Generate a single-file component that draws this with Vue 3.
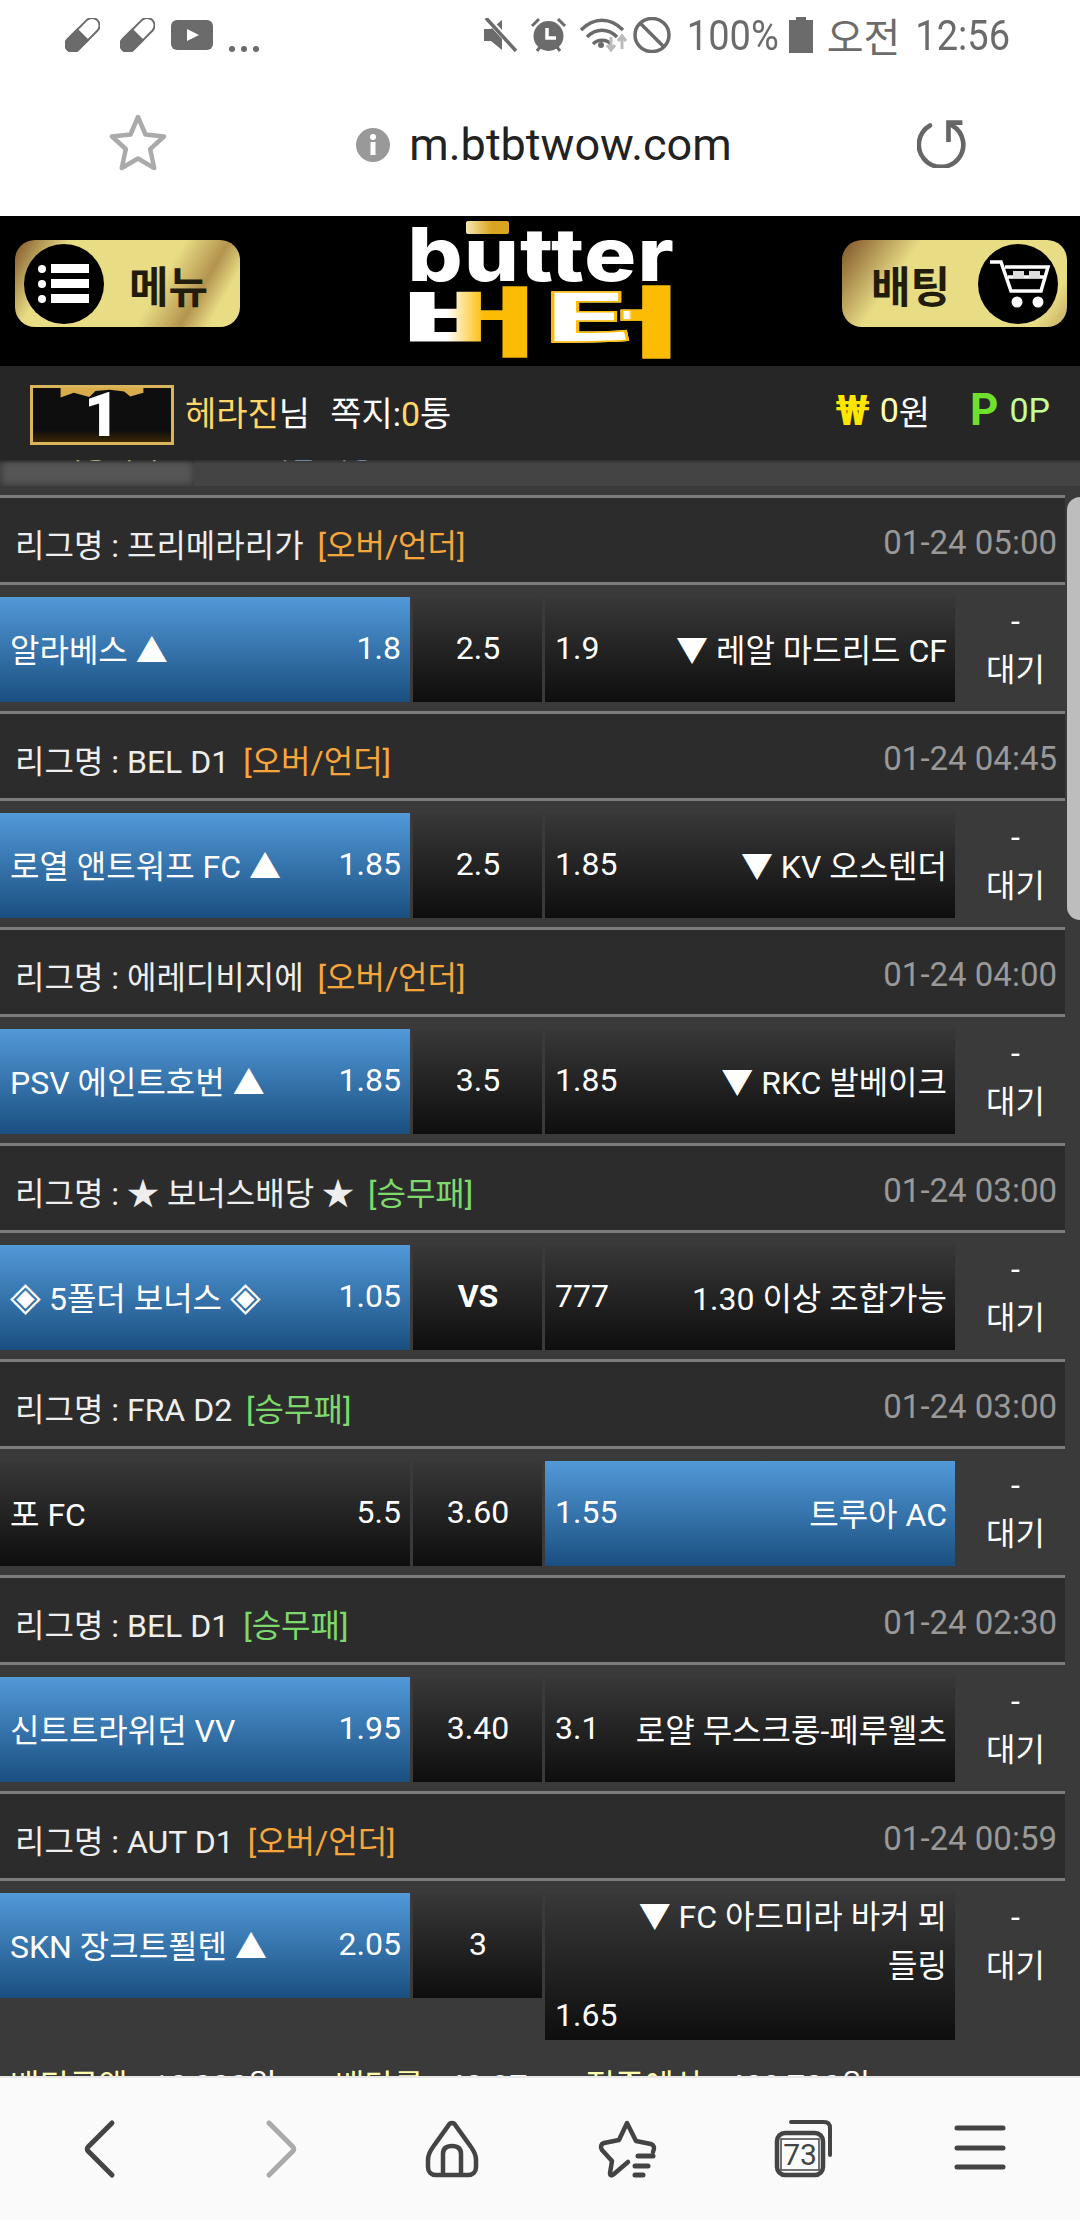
<template>
  <div class="phone">
    <div class="status">
      <div class="status-left">
        <svg v-for="n in 2" :key="n" class="pill" viewBox="0 0 35 34">
          <g transform="rotate(45 17.5 17)">
            <rect x="10" y="-4" width="15" height="42" rx="7.5" fill="none" stroke="#6b6b6b" stroke-width="2" />
            <path d="M10 17h15v13.5a7.500 7.500 0 0 1-15 0z" fill="#6b6b6b" stroke="#6b6b6b" stroke-width="2" />
          </g>
        </svg>
        <svg class="yt" viewBox="0 0 42 30">
          <rect width="42" height="30" rx="6" fill="#6b6b6b" />
          <path d="M16 9l12 6-12 6z" fill="#fff" />
        </svg>
        <span class="more-dots"><i></i><i></i><i></i></span>
      </div>
      <div class="status-right">
        <svg class="st-mute" viewBox="0 0 34 34">
          <path d="M0 11h7l11-9v30l-11-9H0z" fill="#6b6b6b" />
          <path d="M3 0l30 33" stroke="#fff" stroke-width="6" />
          <path d="M2 0l30 33" stroke="#6b6b6b" stroke-width="3.500" />
        </svg>
        <svg class="st-alarm" viewBox="0 0 37 36">
          <circle cx="18.500" cy="19" r="15" fill="#6b6b6b" />
          <path d="M2 9l7-7M35 9l-7-7M7 34l3-4M30 34l-3-4" stroke="#6b6b6b" stroke-width="3" />
          <path d="M17 11v10h9" fill="none" stroke="#fff" stroke-width="3.500" />
        </svg>
        <svg class="st-wifi" viewBox="0 0 47 34">
          <path d="M1 12c13-13 29-13 42 0M7 19c9-9 21-9 30 0M13 26c5-5 13-5 18 0" fill="none" stroke="#6b6b6b" stroke-width="3.500" />
          <circle cx="21" cy="27" r="3" fill="#6b6b6b" />
          <path d="M31 19v12M27 27l4 5 4-5" fill="none" stroke="#bbb" stroke-width="3" />
          <path d="M42 31V18M38 23l4-5 4 5" fill="none" stroke="#bbb" stroke-width="3" />
        </svg>
        <svg class="st-block" viewBox="0 0 38 36">
          <ellipse cx="19" cy="18" rx="17" ry="16.500" fill="none" stroke="#6b6b6b" stroke-width="3.500" />
          <path d="M7 6l24 24" stroke="#6b6b6b" stroke-width="3.500" />
        </svg>
        <span class="st-pct">100%</span>
        <svg class="st-batt" viewBox="0 0 24 36">
          <path d="M7 0h10v3h7v33H0V3h7z" fill="#6b6b6b" />
        </svg>
        <span class="st-ampm">오전</span>
        <span class="st-time">12:56</span>
      </div>
    </div>

    <div class="urlbar">
      <svg class="url-star" viewBox="0 0 58 58">
        <path d="M29 3l7.500 17.500 18.500 2-13.800 12.600 4 19L29 44.500 12.800 54l4-19L3 22.500l18.500-2z" fill="none" stroke="#aaa" stroke-width="4.500" stroke-linejoin="round" />
      </svg>
      <div class="address">
        <svg class="info-icon" viewBox="0 0 34 34">
          <circle cx="17" cy="17" r="17" fill="#999" />
          <rect x="14.500" y="14" width="5" height="13" fill="#fff" />
          <circle cx="17" cy="9" r="3" fill="#fff" />
        </svg>
        <span class="url-text">m.btbtwow.com</span>
      </div>
      <svg class="reload" viewBox="0 0 54 54">
        <path d="M14 8a24 24 0 1 0 24 0" fill="none" stroke="#666" stroke-width="5" stroke-linecap="round" />
        <path d="M34 26V5h15" fill="none" stroke="#666" stroke-width="5" />
      </svg>
    </div>

    <header class="site-head">
      <div class="gold-btn">
        <span class="btn-circle">
          <svg viewBox="0 0 52 44" class="btn-list">
            <g fill="#fff">
              <circle cx="4" cy="7" r="4" /><circle cx="4" cy="22" r="4" /><circle cx="4" cy="37" r="4" />
              <rect x="13" y="2" width="38" height="9" /><rect x="13" y="17" width="38" height="9" /><rect x="13" y="32" width="38" height="9" />
            </g>
          </svg>
        </span>
        <span class="btn-label">메뉴</span>
      </div>

      <div class="logo">
        <div class="logo-en"><span class="logo-en-text">butter</span><i class="macron"></i></div>
        <div class="logo-ko"><span class="logo-ko-text"><span class="ko-a">버</span><span class="ko-b">터</span></span></div>
      </div>

      <div class="gold-btn gold-btn-bet">
        <span class="btn-label">배팅</span>
        <span class="btn-circle">
          <svg viewBox="0 0 64 50" class="btn-cart">
            <path d="M2 3h11l10 29h30l7-24H17M20 18h37" fill="none" stroke="#fff" stroke-width="3.500" />
            <rect x="25" y="12" width="11" height="7" fill="#ddd" /><rect x="41" y="12" width="11" height="7" fill="#ddd" />
            <circle cx="29" cy="43" r="5.500" fill="#fff" /><circle cx="50" cy="43" r="5.500" fill="#fff" />
          </svg>
        </span>
      </div>
    </header>

    <div class="user-bar">
      <div class="user-left">
        <div class="rank">
          <svg class="rank-top" viewBox="0 0 138 20">
            <path d="M0 0h138v8l-22 6-10-8-24-3-24 2-10 10-26-7L0 16z" fill="#d9ac4a" />
          </svg>
          <span>1</span>
        </div>
        <span class="nick">헤라진</span><span>님</span>
        <span class="memo">쪽지:<em>0</em>통</span>
      </div>
      <div class="user-right">
        <b class="won-mark">₩</b><span class="won-val">0</span><span>원</span>
        <b class="p-mark">P</b><span class="p-val">0P</span>
      </div>
    </div>

    <main class="content">
      <div class="tabs">
        <div class="tab tab-on"><span>배팅내역</span></div>
        <div class="tab"><span>지난 배팅</span></div>
      </div>

      <section v-for="g in games" :key="g.time + g.home" class="game">
        <div class="league">
          <div>리그명 : {{ g.league }} <span class="tag" :class="g.kind === '승무패' ? 'tag-green' : 'tag-orange'">[{{ g.kind }}]</span></div>
          <div class="time">{{ g.time }}</div>
        </div>
        <div class="row">
          <div class="cell home" :class="{ on: g.pick === 'home' }">
            <span v-if="g.bonus"><i class="dia">◈</i> {{ g.home }} <i class="dia">◈</i></span>
            <span v-else>{{ g.home }}</span>
            <span>{{ g.homeOdd }}</span>
          </div>
          <div class="cell mid" :class="{ vs: g.mid === 'VS' }">{{ g.mid }}</div>
          <div v-if="g.stacked" class="cell away stacked">
            <div class="away-name">{{ g.away }}</div>
            <div>{{ g.awayOdd }}</div>
          </div>
          <div v-else class="cell away" :class="{ on: g.pick === 'away' }">
            <span>{{ g.awayOdd }}</span><span>{{ g.away }}</span>
          </div>
          <div class="state">-<br />대기</div>
        </div>
      </section>

      <div class="slip">
        <span class="slip-item"><em>배팅금액 :</em> 10,000원</span>
        <span class="slip-item"><em>배당률 :</em> 40.97</span>
        <span class="slip-item"><em>적중예상 :</em> 409,700원</span>
      </div>

      <div class="scrollbar"></div>
    </main>

    <nav class="bottom-bar">
      <svg class="nav-ico" viewBox="0 0 60 60">
        <path d="M42 4L18 28c-1 1-1 3 0 4l24 24" fill="none" stroke="#444" stroke-width="5" stroke-linecap="round" />
      </svg>
      <svg class="nav-ico" viewBox="0 0 60 60">
        <path d="M23 4l24 24c1 1 1 3 0 4L23 56" fill="none" stroke="#aaa" stroke-width="5" stroke-linecap="round" />
      </svg>
      <svg class="nav-ico" viewBox="0 0 60 60">
        <path d="M30 4c2 0 3 1 4 3l15 21c3 4 5 8 5 13v7c0 5-3 8-8 8H14c-5 0-8-3-8-8v-7c0-5 2-9 5-13L26 7c1-2 2-3 4-3z" fill="none" stroke="#444" stroke-width="4.500" />
        <path d="M21 55V35c0-6 4-8 9-8s9 2 9 8v20" fill="none" stroke="#444" stroke-width="4.500" />
      </svg>
      <svg class="nav-ico" viewBox="0 0 60 60">
        <path d="M55 33c2-4 1-7-2-8l-15-3-9-18-8 17-15 3c-3 1-4 4-2 7l10 11-2 12c0 3 2 3 4 1l14-12" fill="none" stroke="#444" stroke-width="4.500" stroke-linejoin="round" stroke-linecap="round" />
        <path d="M40 37h15M37 47h13M37 56h8" stroke="#444" stroke-width="5" stroke-linecap="round" />
      </svg>
      <div class="tabs-ico">
        <svg viewBox="0 0 60 60">
          <path d="M17 3h33c4 0 6 2 6 6v27" fill="none" stroke="#444" stroke-width="4" stroke-linecap="round" />
          <rect x="3" y="14" width="46" height="42" rx="8" fill="none" stroke="#444" stroke-width="4.500" />
          <rect x="7" y="20" width="38" height="31" fill="none" stroke="#444" stroke-width="1.500" />
        </svg>
        <span class="tabs-num">73</span>
      </div>
      <svg class="nav-ico" viewBox="0 0 60 60">
        <path d="M7 9h46M7 29h46M7 48h46" stroke="#444" stroke-width="5" stroke-linecap="round" />
      </svg>
    </nav>
  </div>
</template>

<script setup>
const games = [
  { league: '프리메라리가', kind: '오버/언더', time: '01-24 05:00', home: '알라베스 ▲', homeOdd: '1.8', mid: '2.5', awayOdd: '1.9', away: '▼ 레알 마드리드 CF', pick: 'home' },
  { league: 'BEL D1', kind: '오버/언더', time: '01-24 04:45', home: '로열 앤트워프 FC ▲', homeOdd: '1.85', mid: '2.5', awayOdd: '1.85', away: '▼ KV 오스텐더', pick: 'home' },
  { league: '에레디비지에', kind: '오버/언더', time: '01-24 04:00', home: 'PSV 에인트호번 ▲', homeOdd: '1.85', mid: '3.5', awayOdd: '1.85', away: '▼ RKC 발베이크', pick: 'home' },
  { league: '★ 보너스배당 ★', kind: '승무패', time: '01-24 03:00', home: '5폴더 보너스', bonus: true, homeOdd: '1.05', mid: 'VS', awayOdd: '777', away: '1.30 이상 조합가능', pick: 'home' },
  { league: 'FRA D2', kind: '승무패', time: '01-24 03:00', home: '포 FC', homeOdd: '5.5', mid: '3.60', awayOdd: '1.55', away: '트루아 AC', pick: 'away' },
  { league: 'BEL D1', kind: '승무패', time: '01-24 02:30', home: '신트트라위던 VV', homeOdd: '1.95', mid: '3.40', awayOdd: '3.1', away: '로얄 무스크롱-페루웰츠', pick: 'home' },
  { league: 'AUT D1', kind: '오버/언더', time: '01-24 00:59', home: 'SKN 장크트푈텐 ▲', homeOdd: '2.05', mid: '3', awayOdd: '1.65', away: '▼ FC 아드미라 바커 뫼들링', pick: 'home', stacked: true }
]
</script>

<style>
html,
body {
  margin: 0;
  background: #fff;
}
</style>

<style scoped>
.phone {
  width: 1080px;
  height: 2220px;
  overflow: hidden;
  display: flex;
  flex-direction: column;
  font-family: Roboto, "Noto Sans CJK KR", sans-serif;
  font-size: 32px;
  color: #fff;
}

/* status bar */
.status {
  height: 70px;
  flex: none;
  background: #fff;
  display: flex;
  justify-content: space-between;
  align-items: center;
  padding: 0 70px 0 65px;
  color: #6b6b6b;
}
.status-left,
.status-right {
  display: flex;
  align-items: center;
}
.pill {
  width: 35px;
  height: 34px;
  margin-right: 20px;
}
.yt {
  width: 42px;
  height: 30px;
  margin-left: -4px;
}
.more-dots {
  display: flex;
  gap: 6px;
  margin: 28px 0 0 16px;
}
.more-dots i {
  width: 6px;
  height: 6px;
  border-radius: 50%;
  background: #6b6b6b;
}
.st-mute {
  width: 34px;
  height: 34px;
}
.st-alarm {
  width: 37px;
  height: 36px;
  margin-left: 12px;
}
.st-wifi {
  width: 47px;
  height: 34px;
  margin-left: 13px;
}
.st-block {
  width: 38px;
  height: 36px;
  margin-left: 6px;
}
.st-pct,
.st-time {
  display: inline-block;
  font-size: 38px;
  transform: scaleY(1.14);
}
.st-pct {
  margin-left: 16px;
}
.st-batt {
  width: 24px;
  height: 36px;
  margin-left: 10px;
}
.st-ampm {
  font-size: 40px;
  margin-left: 14px;
}
.st-time {
  margin-left: 15px;
}

/* url bar */
.urlbar {
  height: 146px;
  flex: none;
  background: #fff;
  display: flex;
  align-items: center;
  justify-content: space-between;
  padding: 0 113px 0 109px;
  box-sizing: border-box;
}
.url-star {
  width: 58px;
  height: 58px;
}
.address {
  display: flex;
  align-items: center;
  gap: 19px;
  margin: 3px 0 0 4px;
}
.info-icon {
  width: 34px;
  height: 34px;
}
.url-text {
  font-size: 45px;
  color: #222;
}
.reload {
  width: 50px;
  height: 50px;
}

/* site header */
.site-head {
  height: 150px;
  flex: none;
  background: #000;
  display: flex;
  align-items: center;
  justify-content: space-between;
  padding: 0 13px 0 15px;
}
.gold-btn {
  width: 225px;
  height: 87px;
  border-radius: 20px;
  margin-top: -15px;
  box-sizing: border-box;
  padding: 0 9px;
  display: flex;
  align-items: center;
  gap: 25px;
  background: linear-gradient(120deg, #7d5226 0%, #e8dc85 20%, #e8dc85 62%, #b3944e 78%, #e8dc85 88%);
}
.gold-btn-bet {
  justify-content: flex-end;
  gap: 28px;
  background: linear-gradient(125deg, #7d5226 0%, #e8dc85 28%, #e8dc85 88%, #c4ab60 100%);
}
.btn-circle {
  width: 80px;
  height: 80px;
  border-radius: 50%;
  background: #000;
  flex: none;
  display: flex;
  align-items: center;
  justify-content: center;
}
.btn-list {
  width: 52px;
  height: 44px;
}
.btn-cart {
  width: 64px;
  height: 50px;
  margin-left: 4px;
}
.btn-label {
  font-family: "Noto Sans CJK KR", sans-serif;
  font-size: 43px;
  font-weight: 700;
  color: #221c0c;
}

/* logo */
.logo {
  width: 260px;
  height: 134px;
  margin-top: -7px;
  display: flex;
  flex-direction: column;
  align-items: center;
}
.logo-en {
  position: relative;
  height: 62px;
  line-height: 62px;
  width: 260px;
  text-align: center;
}
.logo-en-text {
  display: inline-block;
  font-family: Inter, sans-serif;
  font-weight: 800;
  font-size: 74px;
  line-height: 62px;
  letter-spacing: 1px;
  transform: scaleX(1.17);
  color: #fff;
  margin-top: 2px;
}
.macron {
  position: absolute;
  left: 55px;
  top: 0;
  width: 43px;
  height: 13px;
  border-radius: 2px;
  background: linear-gradient(90deg, #f6e7b0, #d9a520 60%);
}
.logo-ko {
  height: 72px;
  line-height: 72px;
  width: 260px;
  text-align: center;
}
.logo-ko-text {
  display: inline-block;
  font-family: "Noto Sans CJK KR", sans-serif;
  font-weight: 900;
  font-size: 75px;
  line-height: 70px;
  transform: scaleX(2.05);
}
.ko-a,
.ko-b {
  -webkit-background-clip: text;
  background-clip: text;
  color: transparent;
}
.ko-a {
  background-image: linear-gradient(90deg, #fff 33%, #fcbc05 60%);
}
.ko-b {
  background-image: linear-gradient(90deg, #fff 62%, #fcbc05 64%);
  -webkit-text-stroke: 1.500px #fcbc05;
}

/* user bar */
.user-bar {
  height: 94px;
  flex: none;
  background: #262626;
  display: flex;
  align-items: center;
  justify-content: space-between;
  padding: 0 30px;
  box-sizing: border-box;
  position: relative;
  z-index: 1;
  font-size: 34px;
  box-shadow: 0 2px 2px rgba(0, 0, 0, .3);
}
.user-left,
.user-right {
  display: flex;
  align-items: center;
}
.user-right {
  margin-top: -6px;
}
.user-left {
  margin-top: -3px;
}
.rank {
  position: relative;
  width: 144px;
  height: 60px;
  box-sizing: border-box;
  border: 3px solid #d9b45a;
  background: linear-gradient(180deg, #0e0e0e 0%, #0e0e0e 78%, #3a2606 100%);
  display: flex;
  align-items: center;
  justify-content: center;
  margin-right: 11px;
  margin-top: 6px;
}
.rank-top {
  position: absolute;
  left: 0;
  top: 0;
  width: 138px;
  height: 12px;
}
.rank span {
  position: relative;
  font-size: 62px;
  font-weight: 900;
  line-height: 54px;
}
.nick {
  color: #ffd766;
}
.memo {
  margin-left: 20px;
}
.memo em {
  font-style: normal;
  color: #ffd766;
}
.won-mark {
  color: #ffe600;
  font-size: 42px;
  margin-right: 10px;
}
.won-val {
  color: #ffffb0;
}
.p-mark {
  color: #6fe02c;
  font-size: 44px;
  margin: 0 11px 0 40px;
}
.p-val {
  color: #c4ff96;
}

/* betting list */
.content {
  flex: 1;
  position: relative;
  overflow: hidden;
  background: #3a3a3a;
  display: flex;
  flex-direction: column;
}
.tabs {
  height: 26px;
  flex: none;
  margin-bottom: 9px;
  background: #444;
  display: flex;
  overflow: hidden;
}
.tab {
  height: 26px;
  line-height: 0;
  font-size: 28px;
  color: #9db4d8;
  padding-left: 70px;
}
.tab span {
  position: relative;
  top: -10px;
}
.tab-on {
  width: 194px;
  box-sizing: border-box;
  padding-left: 56px;
  color: #e8e89a;
  background: #565656;
  box-shadow: inset 0 0 8px rgba(0, 0, 0, .45);
}
.game {
  flex: none;
  width: 1065px;
}
.league {
  height: 90px;
  box-sizing: border-box;
  border-top: 3px solid #7d7d7d;
  border-bottom: 3px solid #7d7d7d;
  background: #2c2c2c;
  display: flex;
  align-items: center;
  justify-content: space-between;
  padding: 5px 8px 0 15px;
  font-size: 32px;
  color: #eee;
}
.time {
  color: #999;
  font-size: 33px;
}
.tag {
  margin-left: 6px;
}
.tag-orange {
  color: #f8a63c;
}
.tag-green {
  color: #7dd96c;
}
.row {
  display: grid;
  grid-template-columns: 410px 129px 410px 110px;
  column-gap: 3px;
  padding: 12px 0 9px;
  align-items: start;
}
.cell {
  height: 105px;
  box-sizing: border-box;
  padding: 0 9px 4px 10px;
  display: flex;
  align-items: center;
  justify-content: space-between;
  white-space: nowrap;
  background: linear-gradient(180deg, #383838, #0e0e0e);
}
.cell.on {
  background: linear-gradient(180deg, #5299d8, #1a4f80);
}
.away {
  padding-right: 8px;
}
.dia {
  font-style: normal;
  font-size: 40px;
  line-height: 0;
}
.mid {
  justify-content: center;
}
.vs {
  font-weight: 700;
}
.stacked {
  height: 147px;
  display: block;
  line-height: 49px;
  white-space: normal;
  padding: 0 8px 0 10px;
}
.away-name {
  text-align: right;
  height: 98px;
  padding-left: 70px;
}
.state {
  text-align: center;
  padding-left: 5px;
  line-height: 49px;
}
.slip {
  position: absolute;
  left: 10px;
  top: 1600px;
  font-size: 32px;
  white-space: nowrap;
  display: flex;
  gap: 58px;
}
.slip em {
  font-style: normal;
  color: #ffffb0;
}
.scrollbar {
  position: absolute;
  right: 0;
  top: 37px;
  width: 13px;
  height: 423px;
  border-radius: 13px 0 0 13px;
  background: #bdbdbd;
}

/* browser bottom bar */
.bottom-bar {
  height: 144px;
  flex: none;
  position: relative;
  box-sizing: border-box;
  border-top: 2px solid #e8e8e8;
  background: #fafafa;
  display: grid;
  grid-template-columns: repeat(6, 176px);
  padding: 0 12px;
  align-items: center;
  justify-items: center;
}
.nav-ico,
.tabs-ico {
  width: 60px;
  height: 60px;
}
.tabs-ico {
  position: relative;
}
.tabs-ico svg {
  width: 60px;
  height: 60px;
  display: block;
}
.tabs-num {
  position: absolute;
  left: 3px;
  top: 15px;
  width: 46px;
  text-align: center;
  font-size: 30px;
  line-height: 42px;
  color: #444;
}
</style>
